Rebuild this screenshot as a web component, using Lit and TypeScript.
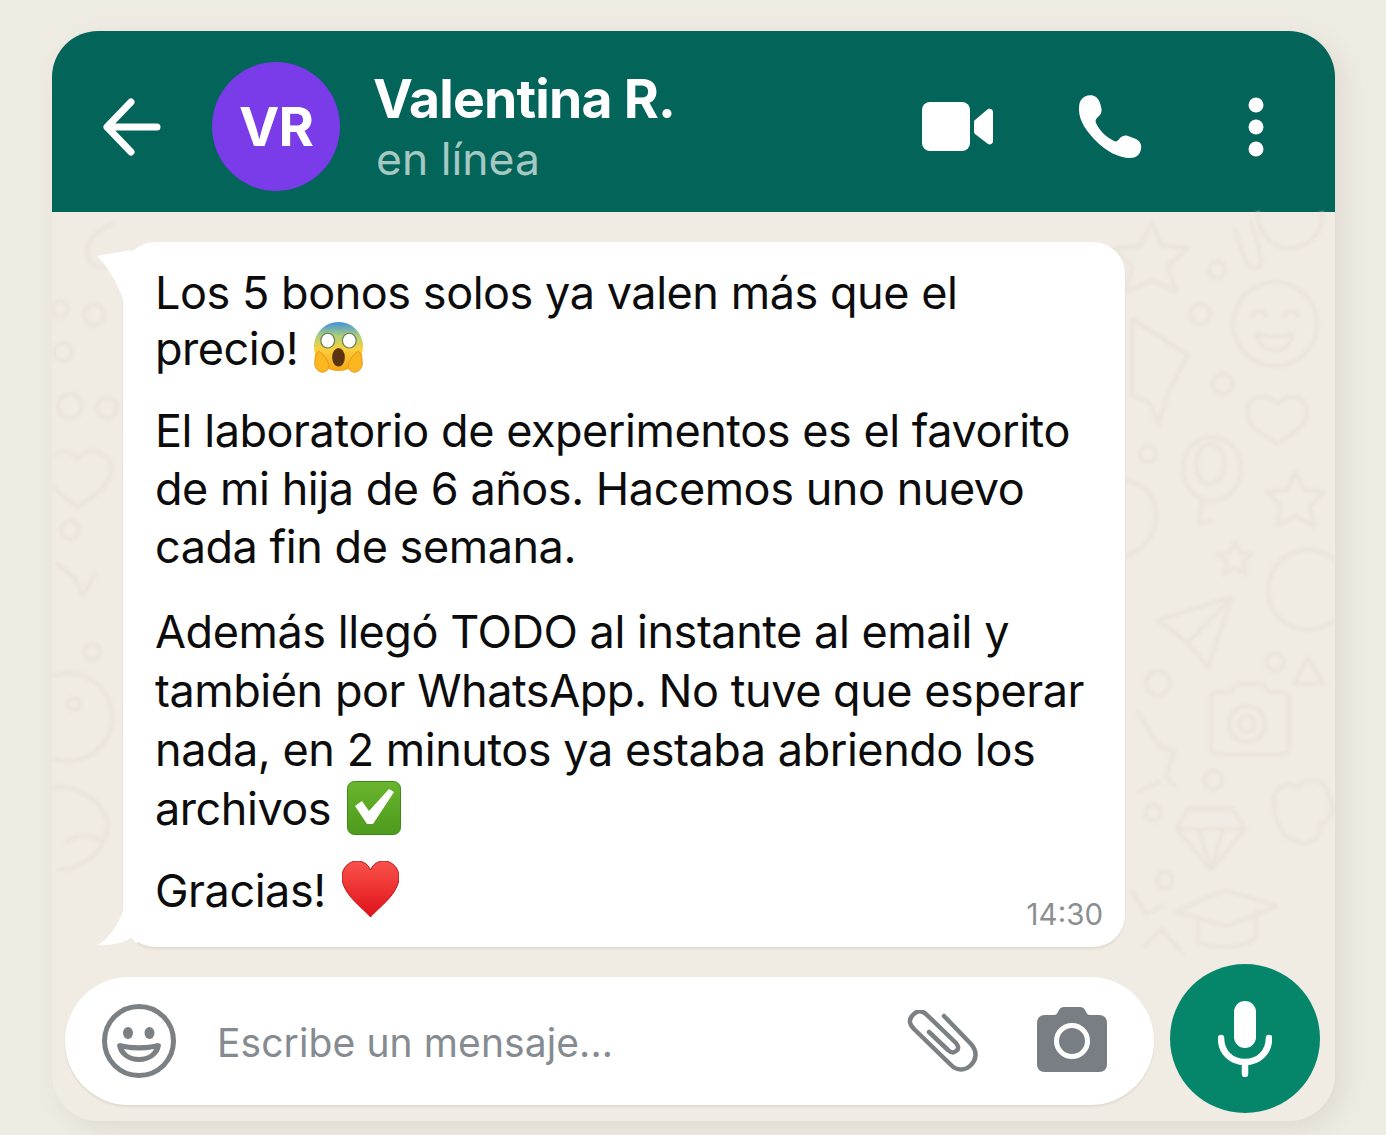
import { LitElement, css, html, svg } from 'lit';
import { customElement } from 'lit/decorators.js';

// faint doodles behind the chat, coordinates are relative to the chat area
const DOODLES = svg`
  <g fill="none" stroke="#eae3d9" stroke-width="3.500" stroke-linecap="round" stroke-linejoin="round">
    <path d="M1100 10l10 24 26 2-20 18 8 26-24-12-26 12 6-26-18-18 26-2z" />
    <path d="M1183 18c4 14 8 28 14 36 6 4 12 2 12-6-2-12-6-26-10-38" />
    <circle cx="1238" cy="4" r="32" />
    <circle cx="1165" cy="58" r="8" /><circle cx="1148" cy="102" r="10" /><circle cx="1171" cy="172" r="10" /><circle cx="1096" cy="242" r="8" />
    <circle cx="1223" cy="112" r="42" />
    <path d="M1200 104c3-6 11-6 14 0M1232 104c3-6 11-6 14 0" />
    <path d="M1205 122c12 4 24 4 36 0-2 12-10 16-18 16s-16-4-18-16z" />
    <path d="M1080 107l56 36-20 38-10 32-8-22-18-8z" />
    <path d="M1225 232c-10-8-30-16-30-32 0-16 20-20 30-8 10-12 30-8 30 8 0 16-20 24-30 32z" />
    <ellipse cx="1160" cy="257" rx="29" ry="32" /><ellipse cx="1158" cy="252" rx="14" ry="20" />
    <path d="M1150 289l-3 22 12-2" />
    <path d="M1243 260l9 18 20 2-14 14 4 20-19-10-18 10 4-20-14-14 20-2z" />
    <path d="M1074 268c22 4 32 22 30 40-2 18-14 30-30 36" />
    <path d="M1183 330l5 11 12 1-9 8 3 12-11-6-11 6 3-12-9-8 12-1z" />
    <circle cx="1256" cy="378" r="40" />
    <path d="M1106 408l74-23-24 70-20-24z" /><path d="M1136 431l44-46" />
    <circle cx="1223" cy="450" r="9" /><path d="M1256 446l16 26h-30z" />
    <circle cx="1106" cy="471" r="12" />
    <path d="M1165 480h14l6-8h26l6 8h14c3 0 6 3 6 6v50c0 3-3 6-6 6h-66c-3 0-6-3-6-6v-50c0-3 3-6 6-6z" />
    <circle cx="1195" cy="512" r="18" /><circle cx="1195" cy="512" r="8" />
    <path d="M1086 501l22 34 14 4-8 26 8 8M1086 580l22-10" />
    <circle cx="1161" cy="568" r="9" />
    <path d="M1135 597h46l12 20-34 41-34-41z" /><path d="M1125 617h68M1147 617l12 41 12-41" />
    <path d="M1222 590c-2-14 14-22 24-14 6-14 30-10 30 8 8 10 4 26-8 28 2 16-14 24-26 16-14-2-20-24-20-38z" />
    <circle cx="1101" cy="601" r="8" /><circle cx="1113" cy="668" r="8" />
    <path d="M1123 700l50-22 52 16-50 20zM1146 706v24c20 8 44 6 58-4v-26" />
    <path d="M1080 680l14 22 16-8M1092 735l18-18 20 24" />
    <path d="M60 12c-18 8-28 20-24 34 4 10 14 12 22 6" />
    <circle cx="8" cy="97" r="8" /><circle cx="42" cy="103" r="10" /><circle cx="11" cy="140" r="9" />
    <circle cx="18" cy="194" r="12" /><circle cx="55" cy="196" r="10" />
    <path d="M25 295c-10-8-30-20-30-38 0-18 22-24 30-10 10-14 34-8 34 10 0 18-22 30-34 38z" />
    <circle cx="18" cy="318" r="9" />
    <path d="M5 352l18 14 8 18 12-22" /><circle cx="40" cy="440" r="8" />
    <circle cx="16" cy="505" r="44" /><circle cx="22" cy="492" r="6" />
    <path d="M0 576c22-4 50 10 56 36-2 26-22 44-50 46" />
    <path d="M14 630c10-8 26-8 36 0" />
  </g>
`;

@customElement('app-root')
export class AppRoot extends LitElement {
  static styles = css`
    :host {
      display: block;
      width: 1386px;
      height: 1135px;
      box-sizing: border-box;
      padding: 31px 51px 14px 52px;
      background: #eeebe3;
      font-family: Inter, 'Liberation Sans', sans-serif;
      overflow: hidden;
    }

    svg {
      display: block;
      flex: none;
    }

    .card {
      height: 100%;
      display: flex;
      flex-direction: column;
      border-radius: 46px;
      background: #f0ebe3;
      box-shadow: 8px 8px 22px rgba(120, 110, 90, 0.12);
      overflow: hidden;
    }

    .header {
      flex: none;
      box-sizing: border-box;
      height: 181px;
      display: flex;
      align-items: center;
      padding: 10px 0 0 51px;
      background: #03645a;
      color: #fff;
    }

    .avatar {
      flex: none;
      width: 128px;
      height: 129px;
      margin-left: 51px;
      display: flex;
      align-items: center;
      justify-content: center;
      border-radius: 50%;
      background: #7a3be8;
      font-size: 54px;
      font-weight: 700;
      letter-spacing: -1px;
    }

    .who {
      flex: 1;
      margin-left: 33px;
      padding-top: 2px;
    }

    .name {
      font-size: 53.500px;
      font-weight: 700;
      line-height: 62px;
      letter-spacing: -0.800px;
    }

    .status {
      margin-left: 3px;
      font-size: 44.500px;
      line-height: 58px;
      color: #a5c8c2;
    }

    .video {
      margin-right: 86px;
    }

    .phone {
      margin-right: 106px;
    }

    .dots {
      margin-right: 71px;
    }

    .chat {
      position: relative;
      flex: 1;
      padding: 30px 0 0 71px;
    }

    .doodles {
      position: absolute;
      left: 0;
      top: 0;
      filter: blur(1.400px);
    }

    .bubble {
      position: relative;
      box-sizing: border-box;
      width: 1002px;
      height: 705px;
      padding: 23px 25px 0 32px;
      border-radius: 32px;
      background: #fff;
      box-shadow: 0 2px 2px rgba(120, 110, 90, 0.12);
      color: #0c0c0c;
      font-size: 45px;
      letter-spacing: -0.460px;
    }

    .bubble p {
      margin: 0;
    }

    .p1 {
      line-height: 56px;
    }

    .bubble .p2 {
      margin-top: 25px;
      line-height: 58px;
    }

    .bubble .p3 {
      margin-top: 26px;
      line-height: 59px;
    }

    .bubble .p4 {
      margin-top: 23px;
      line-height: 60px;
    }

    .emoji {
      display: inline-block;
    }

    .scared {
      margin-left: 1px;
      vertical-align: -8px;
    }

    .check {
      margin-left: 4px;
      vertical-align: -10px;
    }

    .heart {
      margin-left: 4px;
      vertical-align: -11px;
    }

    .tail-top {
      position: absolute;
      left: -26px;
      top: 8px;
    }

    .tail-bottom {
      position: absolute;
      left: -26px;
      bottom: 0;
    }

    .time {
      position: absolute;
      right: 22px;
      bottom: 15px;
      font-size: 29.500px;
      line-height: 36px;
      letter-spacing: 0;
      color: #8a8f92;
    }

    .composer {
      flex: none;
      display: flex;
      align-items: flex-start;
      gap: 16px;
      height: 149px;
      margin: 17px 15px 8px 13px;
      position: relative;
    }

    .input {
      flex: 1;
      height: 128px;
      margin-top: 13px;
      display: flex;
      align-items: center;
      padding-left: 37px;
      border-radius: 64px;
      background: #fff;
      box-shadow: 0 2px 2px rgba(120, 110, 90, 0.12);
    }

    .placeholder {
      flex: 1;
      margin-left: 41px;
      padding-top: 2px;
      font-size: 39px;
      color: #858b90;
      letter-spacing: 0.100px;
    }

    .clip {
      margin-right: 59px;
    }

    .camera {
      margin: 0 47px 4px 0;
    }

    .mic {
      flex: none;
      width: 150px;
      height: 149px;
      display: flex;
      align-items: center;
      justify-content: center;
      border-radius: 50%;
      background: #05866b;
    }
  `;

  private scaredEmoji() {
    return html`<svg class="emoji scared" width="53" height="52" viewBox="0 0 54 53">
      <defs>
        <linearGradient id="sc" x1="0" y1="0" x2="0" y2="1">
          <stop offset="0" stop-color="#3f8fe0" />
          <stop offset="0.28" stop-color="#a9cf7a" />
          <stop offset="0.55" stop-color="#fbcf3c" />
          <stop offset="1" stop-color="#f7a715" />
        </linearGradient>
      </defs>
      <circle cx="27" cy="26" r="25" fill="url(#sc)" />
      <ellipse cx="16" cy="20" rx="7" ry="7.500" fill="#fff" stroke="#6b7a55" stroke-width="1.200" />
      <ellipse cx="38" cy="20" rx="7" ry="7.500" fill="#fff" stroke="#6b7a55" stroke-width="1.200" />
      <ellipse cx="27" cy="37" rx="6.500" ry="9.500" fill="#5a3311" />
      <path d="M7 31c4 2 8 7 10 13 1 5-3 9-8 8-5-2-7-6-6-12 0-4 1-8 4-9z" fill="#fbb720" stroke="#e8951a" stroke-width="1" />
      <path d="M47 31c-4 2-8 7-10 13-1 5 3 9 8 8 5-2 7-6 6-12 0-4-1-8-4-9z" fill="#fbb720" stroke="#e8951a" stroke-width="1" />
    </svg>`;
  }

  private checkEmoji() {
    return html`<svg class="emoji check" width="54" height="54" viewBox="0 0 54 54">
      <defs>
        <linearGradient id="ck" x1="0" y1="0" x2="0" y2="1">
          <stop offset="0" stop-color="#69b52e" />
          <stop offset="1" stop-color="#4d9a1d" />
        </linearGradient>
      </defs>
      <rect x="0.500" y="0.500" width="53" height="53" rx="7" fill="url(#ck)" stroke="#3f8a17" />
      <path d="M8 25l7-5 7 10L42 8l5 3-21 32h-6z" fill="#fff" />
    </svg>`;
  }

  private heartEmoji() {
    return html`<svg class="emoji heart" width="57" height="57" viewBox="0 0 57 57">
      <defs>
        <linearGradient id="hr" x1="0" y1="0" x2="0" y2="1">
          <stop offset="0" stop-color="#f9534b" />
          <stop offset="1" stop-color="#e01019" />
        </linearGradient>
      </defs>
      <path
        d="M28.500 56C21 47 0 33 0 16 0 6 8 0 15 0c6 0 11 3 13.500 9C31 3 36 0 42 0c7 0 15 6 15 16 0 17-21 31-28.500 40z"
        fill="url(#hr)"
        stroke="#c40f16"
        stroke-width="1"
      />
    </svg>`;
  }

  render() {
    return html`
      <div class="card">
        <div class="header">
          <svg width="58" height="60" viewBox="0 0 58 60">
            <path d="M28 5L4 30l24 25M4 30h50" fill="none" stroke="#fff" stroke-width="7" stroke-linecap="round" stroke-linejoin="round" />
          </svg>
          <div class="avatar">VR</div>
          <div class="who">
            <div class="name">Valentina R.</div>
            <div class="status">en línea</div>
          </div>
          <svg class="video" width="71" height="50" viewBox="0 0 71 50">
            <rect x="0" y="0" width="48" height="49" rx="8" fill="#fff" />
            <path d="M53 18l13-11c2-1 5 0 5 3v29c0 3-3 4-5 3L53 32c-1-1-1-2-1-3v-9c0-1 0-1 1-2z" fill="#fff" />
          </svg>
          <svg class="phone" width="63" height="64" viewBox="0 0 63 64">
            <path
              d="M2 5C5 0 13-1 17 2c3 2 5 8 5.500 12 .5 4-1.500 6-3.500 8-2 2-3 3-2 6 3 7 10 14 18 18 2 1 4 0 6-3 2-2 5-3 8-2l8 3c4 2 6 6 5 10-1 6-5 9-11 9-11 0-24-7-33-16C8 37 0 26 0 15c0-4 0-7 2-10z"
              fill="#fff"
            />
          </svg>
          <svg class="dots" width="16" height="60" viewBox="0 0 16 60">
            <circle cx="8" cy="8" r="7.500" fill="#fff" />
            <circle cx="8" cy="30" r="7.500" fill="#fff" />
            <circle cx="8" cy="52" r="7.500" fill="#fff" />
          </svg>
        </div>

        <div class="chat">
          <svg class="doodles" width="1283" height="909" viewBox="0 0 1283 909">${DOODLES}</svg>
          <div class="bubble">
            <svg class="tail-top" width="40" height="50" viewBox="0 0 40 50">
              <path d="M0 6L34 0V50H26C22 36 12 18 0 6z" fill="#fff" />
            </svg>
            <svg class="tail-bottom" width="40" height="40" viewBox="0 0 40 40">
              <path d="M0 38C12 32 21 18 26 4H40V37L34 31C26 36 12 39 0 38z" fill="#fff" />
            </svg>
            <p class="p1">Los 5 bonos solos ya valen más que el precio! ${this.scaredEmoji()}</p>
            <p class="p2">El laboratorio de experimentos es el favorito de mi hija de 6 años. Hacemos uno nuevo cada fin de semana.</p>
            <p class="p3">Además llegó TODO al instante al email y también por WhatsApp. No tuve que esperar nada, en 2 minutos ya estaba abriendo los archivos ${this.checkEmoji()}</p>
            <p class="p4">Gracias! ${this.heartEmoji()}</p>
            <div class="time">14:30</div>
          </div>
        </div>

        <div class="composer">
          <div class="input">
            <svg width="74" height="74" viewBox="0 0 74 74">
              <circle cx="37" cy="37" r="34.500" fill="none" stroke="#7b8085" stroke-width="5" />
              <ellipse cx="26" cy="29" rx="5" ry="6" fill="#7b8085" />
              <ellipse cx="47.500" cy="29" rx="5" ry="6" fill="#7b8085" />
              <path d="M18 39c12 3 26 3 38 0 1 0 3 1 3 2-1 10-11 17-22 17S16 51 15 41c0-1 2-2 3-2z" fill="#7b8085" />
              <path d="M22 45c10 2 20 2 30 0-2 5-8 8-15 8s-13-3-15-8z" fill="#fff" />
            </svg>
            <div class="placeholder">Escribe un mensaje...</div>
            <svg class="clip" width="71" height="63" viewBox="0 0 71 63">
              <path
                d="M37 6L64 34c7 8 5 16 0 21-6 6-14 6-20 0L7 19C1 13 2 8 7 4c4-4 9-3 13 1l29 28c3 4 3 6 0 8-2 2-5 2-8-1L22 22"
                fill="none"
                stroke="#7b8085"
                stroke-width="4.500"
                stroke-linecap="round"
                stroke-linejoin="round"
              />
            </svg>
            <svg class="camera" width="70" height="65" viewBox="0 0 70 65">
              <path
                d="M8 8h9c2 0 3-1 4-3l1-2c1-2 3-3 5-3h16c2 0 4 1 5 3l1 2c1 2 2 3 4 3h9c5 0 8 3 8 8v41c0 5-3 8-8 8H8c-5 0-8-3-8-8V16c0-5 3-8 8-8z"
                fill="#787e83"
              />
              <circle cx="35" cy="34" r="15.500" fill="none" stroke="#fff" stroke-width="5" />
            </svg>
          </div>
          <div class="mic">
            <svg width="54" height="76" viewBox="0 0 54 76">
              <rect x="16" y="0" width="22" height="47" rx="11" fill="#fff" />
              <path d="M3 37c0 14 10 24 24 24s24-10 24-24M27 61v12" fill="none" stroke="#fff" stroke-width="6.500" stroke-linecap="round" />
            </svg>
          </div>
        </div>
      </div>
    `;
  }
}

declare global {
  interface HTMLElementTagNameMap {
    'app-root': AppRoot;
  }
}
